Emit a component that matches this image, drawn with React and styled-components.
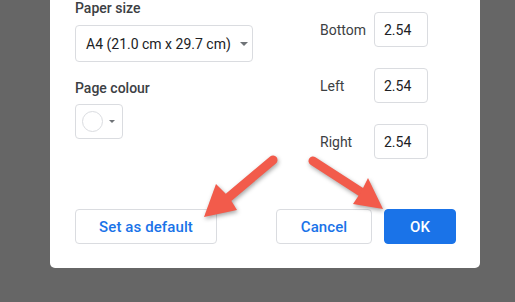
import React from 'react';
import styled, { createGlobalStyle } from 'styled-components';

const Global = createGlobalStyle`
  html, body { margin: 0; padding: 0; background: #666666; }
  body {
    width: 515px; height: 302px; overflow: hidden;
    font-family: Roboto, "Liberation Sans", Arial, sans-serif;
    -webkit-font-smoothing: antialiased;
  }
`;

const Page = styled.div`
  position: relative;
  width: 515px;
  height: 302px;
  background: #666666;
  overflow: hidden;
`;

const Dialog = styled.div`
  margin-left: 50px;
  width: 430px;
  height: 268px;
  background: #ffffff;
  border-radius: 0 0 5px 5px;
  box-sizing: border-box;
  padding: 0 24px 24px 25px;
  display: flex;
  flex-direction: column;
`;

const Body = styled.div`
  display: flex;
  gap: 67px;
`;

const LeftColumn = styled.div`
  display: flex;
  flex-direction: column;
  width: 178px;
`;

const SectionLabel = styled.div`
  font-size: 14px;
  line-height: 16px;
  font-weight: 500;
  color: #3c4043;
  margin-top: ${p => p.$top || 0}px;
`;

const Select = styled.div`
  margin-top: 9px;
  height: 37px;
  box-sizing: border-box;
  border: 1px solid #dadce0;
  border-radius: 4px;
  display: flex;
  align-items: center;
  padding: 0 8px 0 10px;
  gap: 9px;
  font-size: 14px;
  color: #202124;
  white-space: nowrap;
`;

const Caret = styled.span`
  width: 0;
  height: 0;
  border-left: ${p => p.$w}px solid transparent;
  border-right: ${p => p.$w}px solid transparent;
  border-top: ${p => p.$h}px solid #6f7377;
`;

const ColorButton = styled.div`
  margin-top: 8px;
  width: 48px;
  height: 35px;
  box-sizing: border-box;
  border: 1px solid #dadce0;
  border-radius: 4px;
  display: flex;
  align-items: center;
  padding-left: 6px;
  gap: 6px;
`;

const Swatch = styled.span`
  width: 21px;
  height: 21px;
  box-sizing: border-box;
  border-radius: 50%;
  border: 1px solid #dadce0;
  background: #fff;
`;

const MarginGrid = styled.div`
  display: grid;
  grid-template-columns: 54px 54px;
  row-gap: 21px;
  padding-top: 12px;
  align-items: center;
`;

const MarginLabel = styled.div`
  font-size: 14px;
  color: #3c4043;
`;

const MarginInput = styled.div`
  height: 35px;
  box-sizing: border-box;
  border: 1px solid #dadce0;
  border-radius: 4px;
  display: flex;
  align-items: center;
  padding-left: 9px;
  font-size: 14px;
  color: #202124;
`;

const Footer = styled.div`
  margin-top: auto;
  display: flex;
  gap: 12px;
`;

const Button = styled.div`
  height: 35px;
  width: ${p => p.$w}px;
  box-sizing: border-box;
  border-radius: 4px;
  border: 1px solid ${p => (p.$primary ? '#1a73e8' : '#dadce0')};
  background: ${p => (p.$primary ? '#1a73e8' : '#ffffff')};
  color: ${p => (p.$primary ? '#ffffff' : '#1a73e8')};
  font-size: 15px;
  font-weight: 500;
  letter-spacing: 0.1px;
  display: flex;
  align-items: center;
  justify-content: center;
  margin-right: ${p => (p.$push ? 'auto' : '0')};
`;

const Overlay = styled.svg`
  position: absolute;
  left: 0;
  top: 0;
  pointer-events: none;
`;

function Arrow({ tail, notch, head }) {
  return (
    <g>
      <line x1={tail[0]} y1={tail[1]} x2={notch[0]} y2={notch[1]} stroke="#f25b4b" strokeWidth="9" strokeLinecap="round" />
      <polygon points={head.map(p => p.join(',')).join(' ')} fill="#f25b4b" />
    </g>
  );
}

export default function App() {
  const margins = ['Bottom', 'Left', 'Right'];
  return (
    <Page>
      <Global />
      <Dialog>
        <Body>
          <LeftColumn>
            <SectionLabel>Paper size</SectionLabel>
            <Select>
              <span>A4 (21.0 cm x 29.7 cm)</span>
              <Caret $w={4} $h={4} />
            </Select>
            <SectionLabel $top={18}>Page colour</SectionLabel>
            <ColorButton>
              <Swatch />
              <Caret $w={3} $h={3} />
            </ColorButton>
          </LeftColumn>
          <MarginGrid>
            {margins.map(m => (
              <React.Fragment key={m}>
                <MarginLabel>{m}</MarginLabel>
                <MarginInput>2.54</MarginInput>
              </React.Fragment>
            ))}
          </MarginGrid>
        </Body>
        <Footer>
          <Button $w={142} $push>Set as default</Button>
          <Button $w={96}>Cancel</Button>
          <Button $w={72} $primary>OK</Button>
        </Footer>
      </Dialog>
      <Overlay width="515" height="302" viewBox="0 0 515 302">
        <g style={{ filter: 'drop-shadow(1px 2px 2px rgba(0,0,0,0.35))' }}>
          <Arrow tail={[273, 160]} notch={[229, 197]} head={[[204, 217], [216, 184], [229, 197], [237, 210]]} />
          <Arrow tail={[313, 161]} notch={[361, 192]} head={[[383, 209], [368, 178], [361, 192], [353, 204]]} />
        </g>
      </Overlay>
    </Page>
  );
}
